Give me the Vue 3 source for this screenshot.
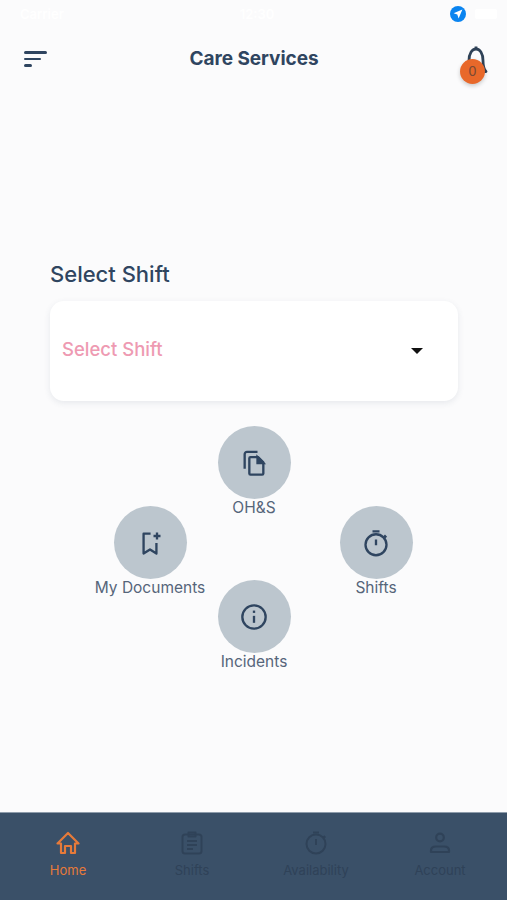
<template>
  <div class="screen">
    <div class="status-bar">
      <span class="status-carrier">Carrier</span>
      <span class="status-time">12:30</span>
      <div class="status-right">
        <svg class="location" viewBox="0 0 16 16" width="16" height="16" aria-hidden="true">
          <circle cx="8" cy="8" r="8" fill="#0a84f0" />
          <path d="M12.4 3.6 3.6 7.3l3.7 1.3 1.3 3.8z" fill="#fff" />
        </svg>
        <span class="status-battery"></span>
      </div>
    </div>

    <header class="top-bar">
      <button type="button" class="icon-btn menu-btn" aria-label="Menu">
        <span class="bar bar-long"></span>
        <span class="bar bar-mid"></span>
        <span class="bar bar-short"></span>
      </button>
      <h1>Care Services</h1>
      <button type="button" class="icon-btn bell-btn" aria-label="Notifications">
        <svg viewBox="0 0 26 30" width="26" height="30" fill="none" stroke="#2f4257" stroke-width="2.800" aria-hidden="true">
          <path d="M13 3.500v2.500M3 28.500c2-2 3-5 3-11 0-7 3-11.500 7-11.500s7 4.500 7 11.500c0 6 1 9 3 11z" stroke-linejoin="round" />
        </svg>
        <span class="badge">0</span>
      </button>
    </header>

    <main class="content">
      <h2>Select Shift</h2>
      <div class="select-box">
        <span class="placeholder">Select Shift</span>
        <span class="caret"></span>
      </div>

      <div class="radial">
        <div class="side-col">
          <div class="action">
            <span class="circle">
              <svg viewBox="0 0 24 24" width="28" height="28" fill="none" stroke="#2f4560" stroke-width="2" aria-hidden="true">
                <path d="M12.500 4H6.500v17l5.500-3.500 5.500 3.500v-9" stroke-linejoin="round" />
                <path d="M18 3v6M15 6h6" />
              </svg>
            </span>
            <span class="action-label">My Documents</span>
          </div>
        </div>
        <div class="mid-col">
          <div class="action action-top">
            <span class="circle">
              <svg viewBox="0 0 24 24" width="28" height="28" fill="none" stroke="#2f4560" stroke-width="2" aria-hidden="true">
                <path d="M15 2.500H6a2 2 0 0 0-2 2V17" />
                <path d="M9 7h6.500l4.500 4.500V21a1 1 0 0 1-1 1H9a1 1 0 0 1-1-1V8a1 1 0 0 1 1-1z" stroke-linejoin="round" />
                <path d="M15 7l5 5h-5z" fill="#2f4560" />
              </svg>
            </span>
            <span class="action-label">OH&amp;S</span>
          </div>
          <div class="action">
            <span class="circle">
              <svg viewBox="0 0 24 24" width="28" height="28" fill="none" stroke="#2f4560" stroke-width="2" aria-hidden="true">
                <circle cx="12" cy="12" r="10" />
                <path d="M12 11v6" />
                <path d="M12 6.500v2" />
              </svg>
            </span>
            <span class="action-label">Incidents</span>
          </div>
        </div>
        <div class="side-col">
          <div class="action">
            <span class="circle">
              <svg viewBox="0 0 24 24" width="28" height="28" fill="none" stroke="#2f4560" stroke-width="2" aria-hidden="true">
                <circle cx="12" cy="13.500" r="9" />
                <path d="M9 2h6M12 9v5M19 5.500l1.800 1.800" />
              </svg>
            </span>
            <span class="action-label">Shifts</span>
          </div>
        </div>
      </div>
    </main>

    <nav class="bottom-nav">
      <a class="nav-item active">
        <svg viewBox="0 0 24 24" width="24" height="24" fill="none" stroke="currentColor" stroke-width="2.200" stroke-linejoin="round" aria-hidden="true">
          <path d="M1.500 12.500 12 2l10.500 10.500H19V22h-4v-7H9v7H5v-9.500z" />
        </svg>
        <span>Home</span>
      </a>
      <a class="nav-item">
        <svg viewBox="0 0 24 24" width="24" height="24" fill="none" stroke="currentColor" stroke-width="2" stroke-linejoin="round" aria-hidden="true">
          <rect x="2.500" y="3.500" width="19" height="19" rx="2.500" />
          <path d="M8.500 1.500h7v4h-7zM7 10h10M7 14h10M7 18h6" />
        </svg>
        <span>Shifts</span>
      </a>
      <a class="nav-item">
        <svg viewBox="0 0 24 24" width="24" height="24" fill="none" stroke="currentColor" stroke-width="2" aria-hidden="true">
          <circle cx="12" cy="13" r="9.500" />
          <path d="M9 1.500h6M12 8v6M19.500 5l1.800 1.800" />
        </svg>
        <span>Availability</span>
      </a>
      <a class="nav-item">
        <svg viewBox="0 0 24 24" width="24" height="24" fill="none" stroke="currentColor" stroke-width="2.200" aria-hidden="true">
          <circle cx="12" cy="6.500" r="3.800" />
          <path d="M3 21v-1.500C3 17 5 15.500 8 15.500h8c3 0 5 1.500 5 4V21z" stroke-linejoin="round" />
        </svg>
        <span>Account</span>
      </a>
    </nav>
  </div>
</template>

<script setup>
</script>

<style>
html,
body {
  margin: 0;
  background: #fbfbfc;
}
</style>

<style scoped>
.screen {
  width: 507px;
  height: 900px;
  display: flex;
  flex-direction: column;
  background: #fbfbfc;
  font-family: Inter, "Open Sans", sans-serif;
  overflow: hidden;
}

.status-bar {
  height: 27px;
  padding: 0 10px 0 20px;
  display: flex;
  align-items: center;
  justify-content: space-between;
  color: #fff;
  font-size: 13px;
  font-weight: 600;
}

.status-right {
  display: flex;
  align-items: center;
  gap: 9px;
}

.location {
  display: block;
}

.status-battery {
  width: 22px;
  height: 10px;
  border-radius: 2px;
  background: #fff;
}

.top-bar {
  height: 62px;
  padding: 0 18px 0 24px;
  display: flex;
  align-items: center;
  justify-content: space-between;
}

.top-bar h1 {
  margin: 0 3px 0 0;
  color: #2f4560;
  font-size: 19px;
  font-weight: 700;
  letter-spacing: -0.05px;
}

.icon-btn {
  border: none;
  background: none;
  padding: 0;
  cursor: pointer;
}

.menu-btn {
  width: 24px;
  margin-top: 2px;
  display: flex;
  flex-direction: column;
  gap: 4px;
}

.bar {
  display: block;
  height: 2.500px;
  background: #2f4560;
  border-radius: 2px;
}

.bar-long {
  width: 23px;
}

.bar-mid {
  width: 17px;
}

.bar-short {
  width: 8px;
}

.bell-btn {
  position: relative;
  width: 26px;
  height: 30px;
}

.bell-btn svg {
  display: block;
}

.badge {
  position: absolute;
  top: 16px;
  left: -3px;
  width: 25px;
  height: 25px;
  border-radius: 50%;
  background: #e8682a;
  color: #7a4a35;
  font-size: 14px;
  line-height: 25px;
  text-align: center;
  box-shadow: 0 2px 4px rgba(0, 0, 0, 0.2);
}

.content {
  flex: 1;
  padding: 0 49px 0 50px;
}

.content h2 {
  margin: 170px 0 12px;
  color: #2f4560;
  font-size: 22px;
  line-height: 30px;
  font-weight: 500;
}

.select-box {
  height: 100px;
  padding: 0 35px 0 12px;
  display: flex;
  align-items: center;
  justify-content: space-between;
  background: #fff;
  border-radius: 14px;
  box-shadow: 0 2px 6px rgba(47, 69, 96, 0.1);
}

.placeholder {
  margin-bottom: 4px;
  color: #ee9ab2;
  font-size: 18.500px;
  font-weight: 500;
}

.caret {
  width: 0;
  height: 0;
  border-left: 6px solid transparent;
  border-right: 6px solid transparent;
  border-top: 6px solid #111;
}

.radial {
  margin: 25px 0 0 37px;
  display: grid;
  grid-template-columns: 126px 82px 162px;
}

.side-col {
  padding-top: 80px;
}

.mid-col {
  display: flex;
  flex-direction: column;
}

.action {
  display: flex;
  flex-direction: column;
  align-items: center;
}

.action-top {
  height: 154px;
}

.circle {
  width: 73px;
  height: 73px;
  flex: none;
  border-radius: 50%;
  background: #bcc6ce;
  display: flex;
  align-items: center;
  justify-content: center;
}

.action-label {
  color: #56657a;
  font-size: 15.500px;
  line-height: 18px;
  white-space: nowrap;
}

.bottom-nav {
  height: 88px;
  padding: 18px 6px 0;
  box-sizing: border-box;
  display: grid;
  grid-template-columns: repeat(4, 124px);
  background: #3a5068;
  border-top: 1px solid #8e9cab;
}

.nav-item {
  display: flex;
  flex-direction: column;
  align-items: center;
  gap: 6px;
  height: 60px;
  color: #2f4258;
  font-size: 13px;
  line-height: 18px;
}

.nav-item.active {
  color: #e67a3a;
}
</style>
